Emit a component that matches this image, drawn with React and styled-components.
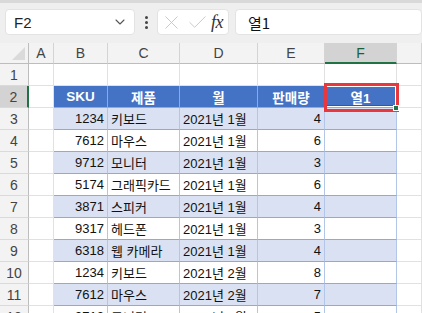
import React from 'react'
import styled, { createGlobalStyle } from 'styled-components'
import { ChevronDown, X, Check } from 'lucide-react'

const Global = createGlobalStyle`
  html, body { margin: 0; padding: 0; background: #ffffff; }
  body { font-family: "Liberation Sans", "Noto Sans CJK KR", sans-serif; overflow: hidden; }
`

const COLS = ['A', 'B', 'C', 'D', 'E', 'F', '']
const HEAD = ['SKU', '제품', '월', '판매량', '열1']
const ROWS = [
  ['1234', '키보드', '2021년 1월', '4'],
  ['7612', '마우스', '2021년 1월', '6'],
  ['9712', '모니터', '2021년 1월', '3'],
  ['5174', '그래픽카드', '2021년 1월', '6'],
  ['3871', '스피커', '2021년 1월', '4'],
  ['9317', '헤드폰', '2021년 1월', '3'],
  ['6318', '웹 카메라', '2021년 1월', '4'],
  ['1234', '키보드', '2021년 2월', '8'],
  ['7612', '마우스', '2021년 2월', '7'],
  ['9712', '모니터', '2021년 2월', '5'],
]
const ALIGN = ['right', 'left', 'left', 'right', 'left']

const Page = styled.div`
  width: 422px;
  height: 313px;
  overflow: hidden;
  background: #ffffff;
`

const Toolbar = styled.div`
  height: 43px;
  box-sizing: border-box;
  background: #efefef;
  border-top: 3px solid #d9d9d9;
  display: flex;
  align-items: center;
  padding: 0 0 2px 5px;
  gap: 6px;
`

const Box = styled.div`
  height: 26px;
  box-sizing: border-box;
  background: #ffffff;
  border: 1px solid #e3e3e3;
  border-radius: 4px;
  display: flex;
  align-items: center;
  width: ${(p) => p.w};
  flex: ${(p) => (p.grow ? 1 : 'none')};
  padding: ${(p) => p.pad || '0'};
  justify-content: ${(p) => p.justify || 'flex-start'};
  font-size: 15px;
  color: #222;
`

const NameText = styled.span`
  flex: 1;
`

const Dots = styled.div`
  width: 10px;
  display: flex;
  flex-direction: column;
  align-items: center;
  gap: 2px;
  span {
    width: 3px;
    height: 3px;
    border-radius: 50%;
    background: #444;
  }
`

const Fx = styled.span`
  font-family: "Liberation Serif", serif;
  font-style: italic;
  font-size: 18px;
  color: #333;
  letter-spacing: -0.5px;
`

const FormulaText = styled.span`
  font-family: "Noto Sans CJK KR", sans-serif;
  font-size: 15px;
  color: #111;
`

const Sheet = styled.div`
  position: relative;
  display: grid;
  grid-template-columns: 29px 25px 54px 72px 78px 67px 72px 1fr;
  grid-template-rows: 21px repeat(12, 22px);
`

const Head = styled.div`
  box-sizing: border-box;
  background: ${(p) => (p.active ? '#d3d3d3' : '#f3f3f3')};
  border-right: 1px solid #d4d4d4;
  border-bottom: ${(p) => (p.active ? '2px solid #217346' : '1px solid #bdbdbd')};
  display: flex;
  align-items: center;
  justify-content: center;
  font-size: 14px;
  color: ${(p) => (p.active ? '#1c5e38' : '#444')};
`

const Corner = styled.div`
  box-sizing: border-box;
  background: #f3f3f3;
  border-right: 1px solid #bdbdbd;
  border-bottom: 1px solid #bdbdbd;
  position: relative;
  &::after {
    content: '';
    position: absolute;
    right: 3px;
    bottom: 3px;
    border-left: 13px solid transparent;
    border-bottom: 13px solid #dadada;
  }
`

const RowNum = styled.div`
  box-sizing: border-box;
  background: ${(p) => (p.active ? '#d3d3d3' : '#f3f3f3')};
  border-right: ${(p) => (p.active ? '2px solid #217346' : '1px solid #bdbdbd')};
  border-bottom: 1px solid #dadada;
  display: flex;
  align-items: center;
  justify-content: center;
  font-size: 14px;
  color: #444;
`

const Cell = styled.div`
  box-sizing: border-box;
  position: relative;
  border-right: 1px solid ${(p) => (p.kind === 'plain' ? '#e1e1e1' : p.kind === 'head' ? '#8ea9db' : '#b4c6e7')};
  border-bottom: 1px solid ${(p) => (p.kind === 'plain' ? '#e1e1e1' : '#8ea9db')};
  background: ${(p) => (p.kind === 'head' ? '#4472c4' : p.kind === 'band' ? '#d9e1f2' : '#ffffff')};
  color: ${(p) => (p.kind === 'head' ? '#ffffff' : '#111')};
  font-weight: ${(p) => (p.kind === 'head' ? 700 : 400)};
  font-size: ${(p) => (p.kind === 'head' ? '13.5px' : '13px')};
  display: flex;
  align-items: center;
  justify-content: ${(p) => (p.kind === 'head' ? 'center' : p.align === 'right' ? 'flex-end' : 'flex-start')};
  padding: 0 3px;
  white-space: nowrap;
  overflow: hidden;
  box-shadow: ${(p) => (p.selected ? 'inset 0 0 0 1px #ffffff, inset 0 -2px 0 #217346' : 'none')};
`

const RedBox = styled.div`
  position: absolute;
  left: 324px;
  top: 40px;
  width: 75px;
  height: 29px;
  box-sizing: border-box;
  border: 3px solid #e8383d;
  pointer-events: none;
`

const Handle = styled.div`
  position: absolute;
  left: 393px;
  top: 62px;
  width: 4px;
  height: 4px;
  background: #217346;
  border: 1px solid #ffffff;
`

export default function App() {
  const rows = []
  for (let r = 1; r <= 12; r++) {
    const cells = []
    for (let c = 0; c < 7; c++) {
      const inTable = r >= 2 && c >= 1 && c <= 5
      let kind = 'plain'
      let text = ''
      if (inTable) {
        if (r === 2) {
          kind = 'head'
          text = HEAD[c - 1]
        } else {
          kind = r % 2 === 1 ? 'band' : 'white'
          const data = ROWS[r - 3]
          text = data && c <= 4 ? data[c - 1] : ''
        }
      }
      cells.push(
        <Cell key={c} kind={kind} align={ALIGN[c - 1]} selected={r === 2 && c === 5}>
          {text}
        </Cell>
      )
    }
    rows.push(
      <React.Fragment key={r}>
        <RowNum active={r === 2}>{r}</RowNum>
        {cells}
      </React.Fragment>
    )
  }

  return (
    <Page>
      <Global />
      <Toolbar>
        <Box w="130px" pad="0 6px 0 8px">
          <NameText>F2</NameText>
          <ChevronDown size={16} color="#555" strokeWidth={1.6} />
        </Box>
        <Dots>
          <span />
          <span />
          <span />
        </Dots>
        <Box w="72px" pad="0 5px 0 2px" justify="space-between">
          <X size={23} color="#c8c8c8" strokeWidth={1} />
          <Check size={23} color="#c8c8c8" strokeWidth={1} />
          <Fx>fx</Fx>
        </Box>
        <Box grow pad="0 12px">
          <FormulaText>열1</FormulaText>
        </Box>
      </Toolbar>
      <Sheet>
        <Corner />
        {COLS.map((l, i) => (
          <Head key={i} active={l === 'F'}>
            {l}
          </Head>
        ))}
        {rows}
        <RedBox />
        <Handle />
      </Sheet>
    </Page>
  )
}
